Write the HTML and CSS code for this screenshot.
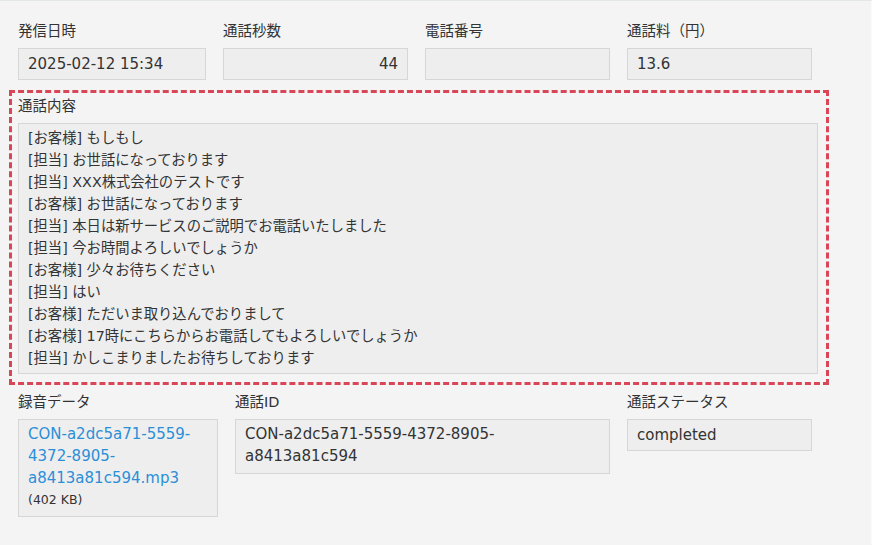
FILE: index.html
```html
<!DOCTYPE html>
<html lang="ja">

<head>
  <meta charset="UTF-8">
  <meta name="viewport" content="width=device-width, initial-scale=1.0">
  <title>通話詳細</title>
  <link rel="stylesheet" href="styles.css">
</head>

<body>
  <div class="detail">
    <div class="row row-top">
      <div class="field">
        <label>発信日時</label>
        <div class="value">2025-02-12 15:34</div>
      </div>
      <div class="field">
        <label>通話秒数</label>
        <div class="value num">44</div>
      </div>
      <div class="field">
        <label>電話番号</label>
        <div class="value"></div>
      </div>
      <div class="field">
        <label>通話料（円）</label>
        <div class="value">13.6</div>
      </div>
    </div>

    <div class="transcript">
      <label>通話内容</label>
      <div class="value talk">
        <div>[お客様] もしもし</div>
        <div>[担当] お世話になっております</div>
        <div>[担当] XXX株式会社のテストです</div>
        <div>[お客様] お世話になっております</div>
        <div>[担当] 本日は新サービスのご説明でお電話いたしました</div>
        <div>[担当] 今お時間よろしいでしょうか</div>
        <div>[お客様] 少々お待ちください</div>
        <div>[担当] はい</div>
        <div>[お客様] ただいま取り込んでおりまして</div>
        <div>[お客様] 17時にこちらからお電話してもよろしいでしょうか</div>
        <div>[担当] かしこまりましたお待ちしております</div>
      </div>
    </div>

    <div class="row row-bottom">
      <div class="field">
        <label>録音データ</label>
        <div class="value multi">
          <a href="#">CON-a2dc5a71-5559-4372-8905-a8413a81c594.mp3</a>
          <small>(402 KB)</small>
        </div>
      </div>
      <div class="field">
        <label>通話ID</label>
        <div class="value multi">CON-a2dc5a71-5559-4372-8905-a8413a81c594</div>
      </div>
      <div class="field">
        <label>通話ステータス</label>
        <div class="value">completed</div>
      </div>
    </div>
  </div>
</body>

</html>
```

FILE: styles.css
```css
body {
  font-family: "DejaVu Sans", "Noto Sans CJK JP", sans-serif;
  font-size: 14px;
  color: #333;
  background: #f4f4f4;
  margin: 0;
  padding: 0;
  border-top: 1px solid #e4e7e7;
  border-right: 1px solid #fafafa;
  min-height: 544px;
  box-sizing: border-box;
}

.detail {
  padding: 20px 0 0 9px;
}

.row {
  display: grid;
  column-gap: 17px;
  padding-left: 9px;
  align-items: start;
}

.row-top {
  grid-template-columns: 188px 185px 185px 185px;
}

.row-bottom {
  grid-template-columns: 200px 375px 185px;
  margin-top: 7px;
}

label {
  display: block;
  font-size: 14.5px;
  line-height: 20px;
  margin-bottom: 7px;
}

.value {
  background: #eeeeee;
  border: 1px solid #d6d6d6;
  height: 32px;
  box-sizing: border-box;
  padding: 0 9px;
  line-height: 30px;
  font-size: 15px;
}

.value.num {
  text-align: right;
}

.value.multi {
  height: auto;
  line-height: 22px;
  padding: 3px 9px;
}

.value.multi small {
  display: block;
  font-size: 12.5px;
}

.value a {
  color: #2b8fd8;
  text-decoration: none;
}

.row-bottom .field:nth-child(2) .value {
  padding-bottom: 6px;
}

.row-bottom .field:first-child .value {
  padding-bottom: 5px;
}

.transcript {
  width: 820px;
  box-sizing: border-box;
  margin-top: 10px;
  border: 3px dashed #d94658;
  padding: 3px 8px 8px 6px;
}

.transcript label {
  margin-bottom: 7px;
}

.value.talk {
  height: auto;
  font-size: 14.3px;
  line-height: 22px;
  padding: 3px 9px 4px;
}
```
